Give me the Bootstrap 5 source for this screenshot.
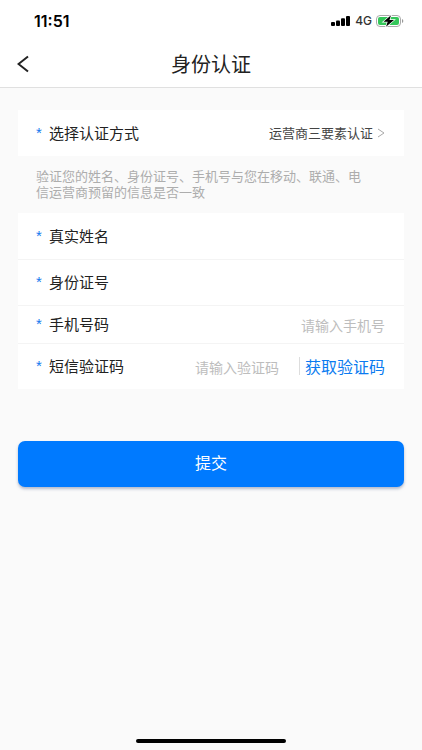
<!DOCTYPE html>
<html lang="zh-CN">
<head>
<meta charset="utf-8">
<meta name="viewport" content="width=device-width, initial-scale=1">
<title>身份认证</title>
<link href="https://cdn.jsdelivr.net/npm/bootstrap@5.3.0/dist/css/bootstrap.min.css" rel="stylesheet">
<style>
body{font-family:"Noto Sans CJK SC",sans-serif;background:#fafafa;color:#222;font-size:15px;line-height:20px}
.status{height:40px;padding:2px 18px 0 34px;font-family:Inter,sans-serif;color:#000}
.clock{font-size:16px;font-weight:600}
.network{font-size:12px;font-weight:500;color:#333}
.title-bar{height:47px;padding:0 17px}
.title-bar h1{font-size:20px;line-height:28px;font-weight:400}
.top-area{border-bottom:1px solid #e0e0e0}
.side{width:24px}
.form-area{padding:22px 18px 0}
.field{min-height:46px;padding:0 19px 1px 18px;background:#fff}
.field + .field{border-top:1px solid #f4f4f4}
.field-short{min-height:38px}
.required{flex:0 0 13px;color:#1277ee;font-family:"Liberation Sans",sans-serif}
.field .form-control,.field .form-select{font-size:14px;line-height:20px;color:#444;text-align:right}
.field .form-control{padding-top:2px}
.field .form-control::placeholder{color:#bdbdbd}
.field .form-select{font-size:13px;background-image:none;text-align-last:right}
.hint{font-size:13px;line-height:16px;color:#adadad;padding:12px 31px 13px 18px}
.code-input{max-width:120px}
.code-btn{font-size:16px;line-height:18px;color:#0b7bf0;padding:0 0 0 5px;border:0;border-left:1px solid #ddd;border-radius:0;margin-left:20px}
.submit{margin-top:52px;height:46px;padding:4px 12px 8px;font-size:16px;background:#007aff;border:0;border-radius:7px;color:#fff;box-shadow:0 2px 3px #6d7ba080}
.submit:hover{background:#006fe8;color:#fff}
.home-bar{width:150px;height:4px;background:#000;margin-bottom:7px}
</style>
<script src="https://cdn.jsdelivr.net/npm/bootstrap@5.3.0/dist/js/bootstrap.bundle.min.js" defer></script>
</head>
<body>
<div class="d-flex flex-column min-vh-100">
  <header class="top-area bg-white">
    <div class="status d-flex align-items-center justify-content-between">
      <span class="clock">11:51</span>
      <div class="d-flex align-items-center gap-1">
        <svg width="20" height="10" viewBox="0 0 20 10" aria-hidden="true"><rect x="0" y="6" width="4" height="4" rx="1"/><rect x="5" y="4.500" width="4" height="5.500" rx="1"/><rect x="10" y="2.300" width="4" height="7.700" rx="1"/><rect x="15" y="0" width="4" height="10" rx="1"/></svg>
        <span class="network">4G</span>
        <svg width="28" height="12" viewBox="0 0 28 12" aria-hidden="true"><rect x=".5" y=".5" width="24" height="11" rx="3.500" fill="#fff" stroke="#aaa"/><rect x="2" y="2" width="21" height="8" rx="2" fill="#34c759"/><path d="M26 4v4q1.300-.6 1.300-2T26 4z" fill="#999"/><path d="M15 .3 7.500 6.800h4.200L10 11.800l8-6.800h-4.500z" stroke="#fff" stroke-width="1.400" paint-order="stroke"/></svg>
      </div>
    </div>
    <div class="title-bar d-flex align-items-center justify-content-between">
      <button type="button" class="btn side p-0 border-0 d-flex" aria-label="返回"><svg width="13" height="18" viewBox="0 0 13 18" fill="none" stroke="#222" stroke-width="2"><path d="M11 1.500 1.500 9l9.500 7.500"/></svg></button>
      <h1 class="m-0">身份认证</h1>
      <span class="side"></span>
    </div>
  </header>
  <main>
    <form class="form-area">
      <div class="field d-flex align-items-center">
        <span class="required">*</span><label for="method" class="text-nowrap">选择认证方式</label>
        <select id="method" class="form-select border-0 bg-transparent p-0 flex-fill"><option>运营商三要素认证</option></select>
        <svg class="ms-1 flex-shrink-0" width="8" height="10" viewBox="0 0 8 10" fill="none" stroke="#aaa" aria-hidden="true"><path d="m1 1 6 4-6 4"/></svg>
      </div>
      <p class="hint m-0">验证您的姓名、身份证号、手机号与您在移动、联通、电信运营商预留的信息是否一致</p>
      <div class="field d-flex align-items-center">
        <span class="required">*</span><label for="name" class="text-nowrap">真实姓名</label>
        <input id="name" class="form-control border-0 bg-transparent px-0 pb-0" type="text">
      </div>
      <div class="field d-flex align-items-center">
        <span class="required">*</span><label for="idno" class="text-nowrap">身份证号</label>
        <input id="idno" class="form-control border-0 bg-transparent px-0 pb-0" type="text">
      </div>
      <div class="field field-short d-flex align-items-center">
        <span class="required">*</span><label for="phone" class="text-nowrap">手机号码</label>
        <input id="phone" class="form-control border-0 bg-transparent px-0 pb-0" type="tel" placeholder="请输入手机号">
      </div>
      <div class="field d-flex align-items-center">
        <span class="required">*</span><label for="code" class="text-nowrap">短信验证码</label>
        <input id="code" class="code-input form-control border-0 bg-transparent px-0 pb-0 ms-auto" type="text" placeholder="请输入验证码">
        <button type="button" class="btn code-btn text-nowrap">获取验证码</button>
      </div>
      <button type="submit" class="btn submit w-100">提交</button>
    </form>
  </main>
  <div class="home-bar rounded-pill mx-auto mt-auto"></div>
</div>
</body>
</html>
